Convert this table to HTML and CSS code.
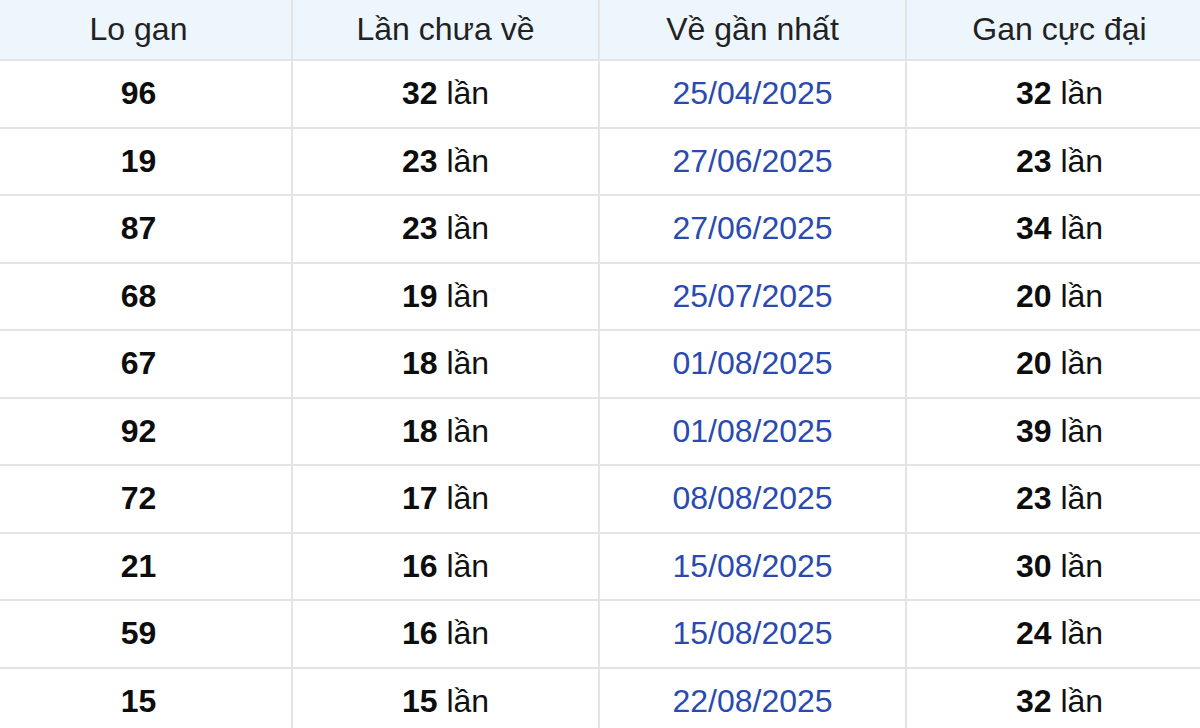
FILE: index.html
```html
<!DOCTYPE html>
<html lang="vi">
<head>
<meta charset="utf-8">
<link rel="stylesheet" href="styles.css">
</head>
<body>
<div class="table">
  <div class="row head">
    <div class="cell">Lo gan</div>
    <div class="cell">Lần chưa về</div>
    <div class="cell">Về gần nhất</div>
    <div class="cell">Gan cực đại</div>
  </div>
  <div class="row"><div class="cell"><b>96</b></div><div class="cell"><b>32</b>&nbsp;lần</div><div class="cell date">25/04/2025</div><div class="cell"><b>32</b>&nbsp;lần</div></div>
  <div class="row"><div class="cell"><b>19</b></div><div class="cell"><b>23</b>&nbsp;lần</div><div class="cell date">27/06/2025</div><div class="cell"><b>23</b>&nbsp;lần</div></div>
  <div class="row"><div class="cell"><b>87</b></div><div class="cell"><b>23</b>&nbsp;lần</div><div class="cell date">27/06/2025</div><div class="cell"><b>34</b>&nbsp;lần</div></div>
  <div class="row"><div class="cell"><b>68</b></div><div class="cell"><b>19</b>&nbsp;lần</div><div class="cell date">25/07/2025</div><div class="cell"><b>20</b>&nbsp;lần</div></div>
  <div class="row"><div class="cell"><b>67</b></div><div class="cell"><b>18</b>&nbsp;lần</div><div class="cell date">01/08/2025</div><div class="cell"><b>20</b>&nbsp;lần</div></div>
  <div class="row"><div class="cell"><b>92</b></div><div class="cell"><b>18</b>&nbsp;lần</div><div class="cell date">01/08/2025</div><div class="cell"><b>39</b>&nbsp;lần</div></div>
  <div class="row"><div class="cell"><b>72</b></div><div class="cell"><b>17</b>&nbsp;lần</div><div class="cell date">08/08/2025</div><div class="cell"><b>23</b>&nbsp;lần</div></div>
  <div class="row"><div class="cell"><b>21</b></div><div class="cell"><b>16</b>&nbsp;lần</div><div class="cell date">15/08/2025</div><div class="cell"><b>30</b>&nbsp;lần</div></div>
  <div class="row"><div class="cell"><b>59</b></div><div class="cell"><b>16</b>&nbsp;lần</div><div class="cell date">15/08/2025</div><div class="cell"><b>24</b>&nbsp;lần</div></div>
  <div class="row"><div class="cell"><b>15</b></div><div class="cell"><b>15</b>&nbsp;lần</div><div class="cell date">22/08/2025</div><div class="cell"><b>32</b>&nbsp;lần</div></div>
</div>
</body>
</html>
```
FILE: styles.css
```css
html, body {
  margin: 0;
  padding: 0;
  background: #ffffff;
  overflow: hidden;
}
body {
  font-family: "Liberation Sans", Arial, sans-serif;
  font-size: 32px;
  color: #111111;
}
.table {
  width: 1228px;
  margin-left: -14px;
}
.row {
  display: grid;
  grid-template-columns: repeat(4, 307px);
  height: 67.5px;
  border-bottom: 2px solid #e4e4e4;
  box-sizing: border-box;
}
.row.head {
  height: 61px;
  background: #eef6fd;
  color: #222222;
}
.cell {
  display: flex;
  align-items: center;
  justify-content: center;
  border-right: 2px solid #e4e4e4;
  box-sizing: border-box;
  white-space: nowrap;
}
.cell b {
  font-weight: 700;
  color: #0d0d0d;
}
.cell.date {
  color: #2a4aaf;
}
```
